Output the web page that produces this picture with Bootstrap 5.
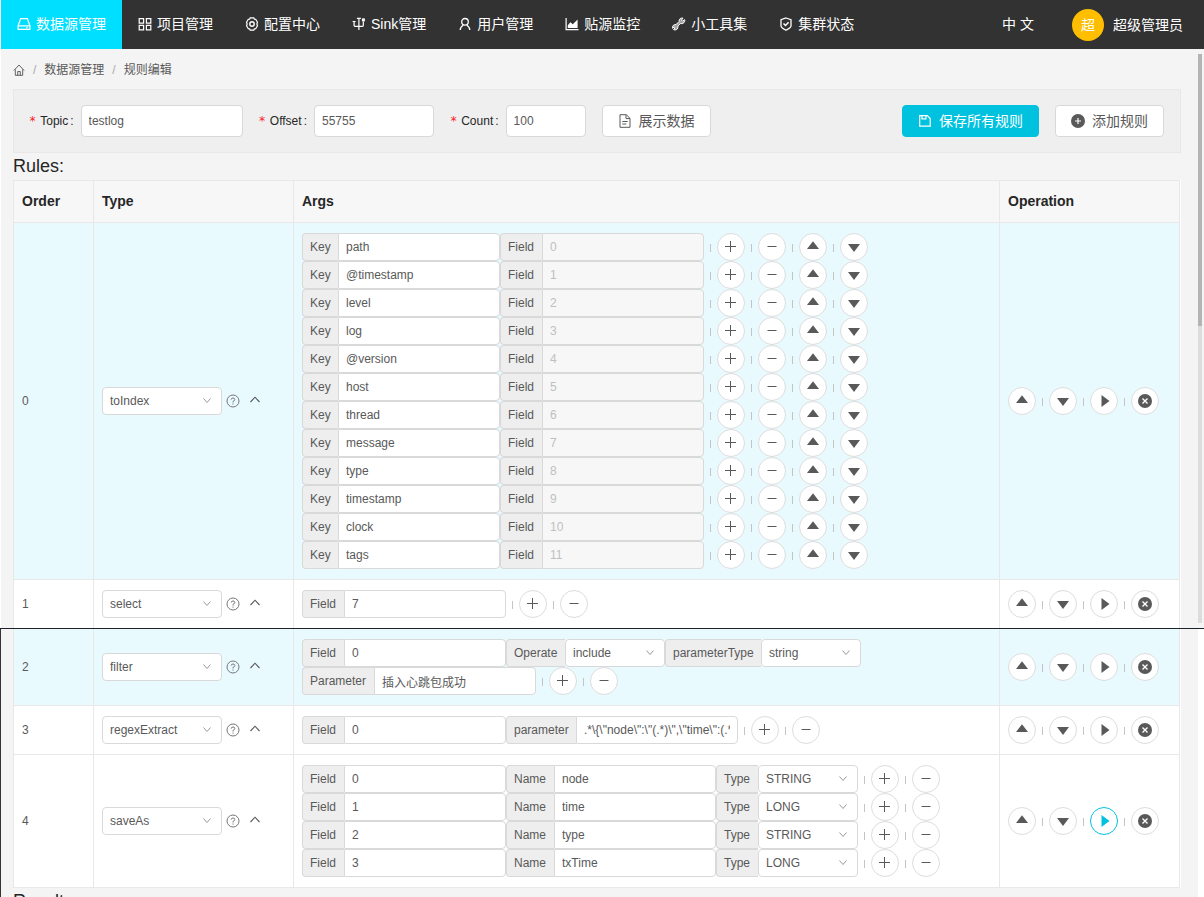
<!DOCTYPE html>
<html lang="zh-CN">
<head>
<meta charset="utf-8">
<meta name="viewport" content="width=device-width, initial-scale=1">
<title>规则编辑</title>
<link rel="stylesheet" href="https://cdn.jsdelivr.net/npm/bootstrap@5.3.0/dist/css/bootstrap.min.css">
<style>
  :root {
    --line: #e8e8e8;
    --ctl-line: #d9d9d9;
    --ink: #595959;
    --accent: #00c1de;
    --bs-border-radius: 4px;
  }
  body {
    font-family: "Liberation Sans", "Noto Sans CJK SC", sans-serif;
    font-size: 12px;
    line-height: 18px;
    color: var(--ink);
    background: #f4f4f4;
  }
  svg { display: block; flex: none; }
  .ico { width: 14px; height: 14px; fill: none; stroke: currentColor; }
  .ico-sm { width: 12px; height: 12px; }

  .edge { width: 1px; }
  .edge-top { height: 629px; background: #fff; }
  .edge-rest { background: #333; }

  /* top navigation */
  .topbar { height: 49px; background: #323232; font-size: 14px; }
  .topbar .nav-link { height: 49px; padding: 0 16px 2px; gap: 5px; color: #fff; white-space: nowrap; }
  .topbar .nav-link.active { background: #00dfff; }
  .lang { padding-bottom: 2px; }
  .avatar { width: 32px; height: 32px; margin: 0 9px 0 38px; background: #ffbf00; }
  .account { padding-right: 21px; padding-top: 1px; }

  .workspace { padding: 0 17px 0 12px; }
  .crumbs { height: 40px; padding-top: 2px; --bs-breadcrumb-font-size: 12px; --bs-breadcrumb-divider-color: #bbb; }
  .crumbs a { color: var(--ink); text-decoration: none; }
  .crumbs .breadcrumb-item + .breadcrumb-item { padding-left: 8px; }
  .crumbs .breadcrumb-item + .breadcrumb-item::before { padding-right: 8px; color: #aaa; }

  /* query form */
  .query { height: 64px; padding: 0 16px 0 15px; background: #efefef; border: 1px solid var(--line); gap: 16px; }
  .query label { color: #262626; }
  .query label::before { content: "*"; color: #f5222d; margin-right: 4px; font-family: "DejaVu Sans Mono", monospace; }
  .query label::after { content: ":"; margin: 0 7px 0 2px; }
  .query .form-control { height: 32px; padding: 0 7px; }
  .field-lg { width: 162px; }
  .field-md { width: 120px; }
  .field-sm { width: 80px; }
  .form-control, .form-select { font-size: 12px; line-height: 18px; color: var(--ink); border: 1px solid var(--ctl-line); border-radius: 4px; background-color: #fff; }
  .tool { height: 32px; padding: 0 15px; gap: 7px; font-size: 14px; line-height: 20px; color: var(--ink); background: #fff; border: 1px solid var(--ctl-line); border-radius: 4px; }
  .tool-main { background: var(--accent); border-color: var(--accent); color: #fff; }

  .section-title { font-size: 18px; line-height: 27px; color: #262626; font-weight: 400; margin: 0; }

  /* rules table */
  .table-holder { background: #fff; padding-right: 1px; }
  .rules { table-layout: fixed; border-collapse: separate; border-spacing: 0; border-top: 1px solid var(--line); border-left: 1px solid var(--line); color: var(--ink); }
  .rules > :not(caption) > * > * { padding: 10px 8px; border: 0 solid var(--line); border-width: 0 1px 1px 0; box-shadow: none; background: #fff; }
  .rules > thead > tr > th { background: #f7f7f7; color: #262626; font-size: 14px; line-height: 21px; }
  .rules > tbody > tr.tinted > td { background: #e9fafe; }
  .col-order { width: 80px; }
  .col-type { width: 200px; }
  .col-ops { width: 180px; }

  .rules .form-control, .rules .form-select { height: 28px; min-height: 28px; padding: 0 7px; flex: none; }
  .rules .form-control { width: 162px; }
  .rules .form-control:disabled { background: #f7f7f7; color: #bfbfbf; }
  .rules .form-select { width: 100px; background-image: url("data:image/svg+xml,%3Csvg xmlns='http://www.w3.org/2000/svg' viewBox='0 0 10 8'%3E%3Cpath d='M1.5 1.5 5 5.5 8.5 1.5' fill='none' stroke='%23999'/%3E%3C/svg%3E"); background-size: 10px 8px; background-position: right 9px center; }
  .rules .form-select.rule-type { width: 120px; }
  .rules .input-group { width: auto; flex: none; }
  .rules .input-group > .input-group-text { padding: 0 0 0 7px; height: 28px; font-size: 12px; line-height: 18px; color: var(--ink); background: #eee; border: 1px solid var(--ctl-line); border-right: 0; border-radius: 4px 0 0 4px; }
  .lab-Key { width: 36px; }
  .lab-Field, .lab-Type { width: 42px; }
  .lab-Name { width: 48px; }
  .lab-Operate { width: 59px; }
  .lab-parameter { width: 70px; }
  .lab-Parameter { width: 72px; }
  .lab-parameterType { width: 96px; }

  .tick { width: 1px; height: 8px; margin: 2px 6px 0; background: #c4c4c4; }
  .round-btn { width: 28px; height: 28px; padding: 0; color: var(--ink); background: #fff; border: 1px solid #ddd; border-radius: 50%; }
  .round-btn.is-on { color: var(--accent); border-color: var(--accent); }
  .plain { padding: 0; border: 0; color: var(--ink); }
  .help { margin: 0 8px 0 4px; color: #777; }

  /* scroll rail */
  .rail { width: 6px; padding-top: 5px; }
  .thumb { width: 4px; height: 272px; background: #b4b4b4; }
  .track { width: 4px; height: 297px; background: #dcdcdc; }
  .rail-end { margin-top: 6px; background: #fff; }
  .seam { top: 628px; height: 1px; background: #1b222a; }
</style>
</head>
<body>
<svg class="d-none" aria-hidden="true">
  <symbol id="i-drive" viewBox="0 0 14 14"><path d="M3.600 1.600h6.800L12.900 8.800V12.400H1.100V8.800zM1.100 8.900H12.900M9.300 10.700h1.400" stroke-width="1.200"/></symbol>
  <symbol id="i-grid" viewBox="0 0 14 14"><path d="M1.200 1.700h4.400v4.400H1.200zM8.400 1.700h4.400v4.400H8.400zM1.200 8.400h4.400v4.400H1.200zM8.400 8.400h4.400v4.400H8.400z" stroke-width="1.200"/></symbol>
  <symbol id="i-gear" viewBox="0 0 14 14"><path d="M5.200.9h3.600l.6 1.300 1.300.1 1.800 3-.7 1.700.7 1.700-1.800 3-1.300.1-.6 1.300H5.200l-.6-1.300-1.300-.1-1.800-3L2.200 7l-.7-1.700 1.800-3 1.300-.1z" stroke-width="1.200"/><circle cx="7" cy="7" r="2.200" stroke-width="1.400"/></symbol>
  <symbol id="i-branch" viewBox="0 0 14 14"><path d="M6.900 1.400V13M4.900 1.400h4M2.100 5v3.600q0 .8.800.8h7.600q.8 0 .8-.8V4.500M.6 4.500h3" stroke-width="1.200"/><path d="M9.900 1.400h3v3h-3z" fill="currentColor" stroke="none"/></symbol>
  <symbol id="i-user" viewBox="0 0 14 14"><circle cx="7" cy="4.800" r="3.300" stroke-width="1.300"/><path d="M2.200 13q.2-3.200 3-4.700M11.800 13q-.2-3.200-3-4.700" stroke-width="1.300"/></symbol>
  <symbol id="i-area" viewBox="0 0 14 14"><path d="M1.100 1v11.600H13.500" stroke-width="1.200"/><path d="M2.800 11V8.200l2.600-3 2.400 2 4.800-4.600V11z" fill="currentColor" stroke="none"/></symbol>
  <symbol id="i-tool" viewBox="0 0 14 14"><path d="M12.700 4.300q-.6 2-2.600 2.400-1 .1-1.700-.2L5.900 9q.4 2.300-1.200 3.500-1.500.9-3.200.1l1.600-1.700-.9-.9-1.600 1.300Q.2 9.300 1.500 8.200q1-.8 2.500-.6l3.100-3.100Q7 2.700 8.200 1.600 9.400.8 11 1.100L9.500 3l1.200 1.200 1.800-1.600q.5.800.2 1.700z" fill="currentColor" fill-opacity=".55" stroke-width="1"/></symbol>
  <symbol id="i-shield" viewBox="0 0 14 14"><path d="M7 1l5 1.600V9Q12 10.500 7 13.200 2 10.500 2 9V2.600z" stroke-width="1.300"/><path d="M4.500 6.500 6.500 8.500 9.600 5.200" stroke-width="1.500"/></symbol>
  <symbol id="i-home" viewBox="0 0 14 14"><path d="M1 7.600 7 1.200l6 6.400M2.700 6.300v6.900h8.600V6.300M5.500 13.200V8.800h3v4.400" stroke-width="1.100"/></symbol>
  <symbol id="i-file" viewBox="0 0 14 14"><path d="M2 .7h6.300L12 4.300v9H2zM8 1v3.600h4M4.300 7.500h5.400M4.300 10h4" stroke-width="1"/></symbol>
  <symbol id="i-save" viewBox="0 0 14 14"><path d="M1.700 1.700h7.600l2.900 2.900v7.600H1.700zM4 1.700v3.100h3.900V1.700" stroke-width="1.200"/></symbol>
  <symbol id="i-addfill" viewBox="0 0 14 14"><circle cx="7" cy="7" r="7" fill="currentColor" stroke="none"/><path d="M7 4v6M4 7h6" stroke="#fff" stroke-width="1.200"/></symbol>
  <symbol id="i-plus" viewBox="0 0 14 14"><path d="M6.500 1v11M1 6.500h11"/></symbol>
  <symbol id="i-minus" viewBox="0 0 14 14"><path d="M2.500 6.500h9"/></symbol>
  <symbol id="i-up" viewBox="0 0 14 14"><path d="M7 1.200 13 9H1z" fill="currentColor" stroke="none"/></symbol>
  <symbol id="i-down" viewBox="0 0 14 14"><path d="M7 12 13 4H1z" fill="currentColor" stroke="none"/></symbol>
  <symbol id="i-play" viewBox="0 0 14 14"><path d="M4.500 1v12L12.500 7z" fill="currentColor" stroke="none"/></symbol>
  <symbol id="i-close" viewBox="0 0 14 14"><circle cx="7" cy="7" r="7" fill="currentColor" stroke="none"/><path d="M4.500 4.500l5 5M9.500 4.500l-5 5" stroke="#fff" stroke-width="1.400"/></symbol>
  <symbol id="i-help" viewBox="0 0 14 14"><circle cx="7" cy="7" r="6" stroke-width="1"/><path d="M5.200 5.600Q5.300 4 7 4t1.800 1.500Q8.800 6.700 7 7.400v1.100M7 9.500v1.100" stroke-width="1"/></symbol>
  <symbol id="i-fold" viewBox="0 0 14 14"><path d="M2.500 8 7 3.200 11.500 8" stroke-width="1.100"/></symbol>
</svg>

<div class="d-flex vh-100 overflow-hidden position-relative">
  <div class="edge d-flex flex-column flex-shrink-0">
    <div class="edge-top flex-shrink-0"></div>
    <div class="edge-rest flex-grow-1"></div>
  </div>

  <div class="flex-grow-1 d-flex flex-column overflow-hidden">
    <header class="topbar d-flex align-items-center flex-shrink-0">
      <nav class="nav flex-nowrap me-auto" aria-label="主导航">
        <a class="nav-link active d-flex align-items-center" href="#"><svg class="ico"><use href="#i-drive"/></svg>数据源管理</a>
        <a class="nav-link d-flex align-items-center" href="#"><svg class="ico"><use href="#i-grid"/></svg>项目管理</a>
        <a class="nav-link d-flex align-items-center" href="#"><svg class="ico"><use href="#i-gear"/></svg>配置中心</a>
        <a class="nav-link d-flex align-items-center" href="#"><svg class="ico"><use href="#i-branch"/></svg>Sink管理</a>
        <a class="nav-link d-flex align-items-center" href="#"><svg class="ico"><use href="#i-user"/></svg>用户管理</a>
        <a class="nav-link d-flex align-items-center" href="#"><svg class="ico"><use href="#i-area"/></svg>贴源监控</a>
        <a class="nav-link d-flex align-items-center" href="#"><svg class="ico"><use href="#i-tool"/></svg>小工具集</a>
        <a class="nav-link d-flex align-items-center" href="#"><svg class="ico"><use href="#i-shield"/></svg>集群状态</a>
      </nav>
      <a class="lang text-white text-decoration-none text-nowrap" href="#">中 文</a>
      <a class="account d-flex align-items-center text-white text-decoration-none text-nowrap" href="#">
        <span class="avatar rounded-circle d-flex align-items-center justify-content-center">超</span>超级管理员
      </a>
    </header>

    <div class="d-flex flex-grow-1 overflow-hidden">
      <main class="workspace flex-grow-1">
        <nav class="crumbs d-flex align-items-center" aria-label="breadcrumb">
          <ol class="breadcrumb mb-0">
            <li class="breadcrumb-item d-flex align-items-center"><a href="#" aria-label="首页"><svg class="ico ico-sm"><use href="#i-home"/></svg></a></li>
            <li class="breadcrumb-item"><a href="#">数据源管理</a></li>
            <li class="breadcrumb-item"><a href="#" aria-current="page">规则编辑</a></li>
          </ol>
        </nav>

        <form class="query d-flex align-items-center" onsubmit="return false">
          <div class="d-flex align-items-center"><label for="topic">Topic</label><input id="topic" class="form-control field-lg" value="testlog"></div>
          <div class="d-flex align-items-center"><label for="offset">Offset</label><input id="offset" class="form-control field-md" value="55755"></div>
          <div class="d-flex align-items-center"><label for="count">Count</label><input id="count" class="form-control field-sm" value="100"></div>
          <button type="button" class="btn tool d-flex align-items-center me-auto"><svg class="ico"><use href="#i-file"/></svg>展示数据</button>
          <button type="button" class="btn tool tool-main d-flex align-items-center"><svg class="ico"><use href="#i-save"/></svg>保存所有规则</button>
          <button type="button" class="btn tool d-flex align-items-center"><svg class="ico"><use href="#i-addfill"/></svg>添加规则</button>
        </form>

        <h2 class="section-title">Rules:</h2>
        <div class="table-holder">
          <table class="table rules align-middle mb-0">
            <colgroup><col class="col-order"><col class="col-type"><col><col class="col-ops"></colgroup>
            <thead><tr><th scope="col">Order</th><th scope="col">Type</th><th scope="col">Args</th><th scope="col">Operation</th></tr></thead>
            <tbody id="rules"></tbody>
          </table>
        </div>
        <h2 class="section-title">Result:</h2>
      </main>

      <div class="rail d-flex flex-column flex-shrink-0" aria-hidden="true">
        <div class="thumb flex-shrink-0"></div>
        <div class="track flex-shrink-0"></div>
        <div class="rail-end flex-grow-1"></div>
      </div>
    </div>
  </div>
  <div class="seam position-absolute start-0 w-100"></div>
</div>

<script src="https://cdn.jsdelivr.net/npm/bootstrap@5.3.0/dist/js/bootstrap.bundle.min.js"></script>
<script>
  // A line is a list of [label, value, kind]; buttons lists the actions after it.
  const keys = ['path', '@timestamp', 'level', 'log', '@version', 'host', 'thread', 'message', 'type', 'timestamp', 'clock', 'tags'];
  const pm = ['plus', 'minus'];
  const rules = [
    { type: 'toIndex', tinted: true, lines: keys.map((k, i) => ({ fields: [['Key', k], ['Field', i, 'disabled']], buttons: ['plus', 'minus', 'up', 'down'] })) },
    { type: 'select', lines: [{ fields: [['Field', 7]], buttons: pm }] },
    { type: 'filter', tinted: true, lines: [
      { fields: [['Field', 0], ['Operate', 'include', 'select'], ['parameterType', 'string', 'select']], buttons: [] },
      { fields: [['Parameter', '插入心跳包成功']], buttons: pm }] },
    { type: 'regexExtract', lines: [{ fields: [['Field', 0], ['parameter', '.*\\{\\"node\\":\\"(.*)\\",\\"time\\":(.*)\\}']], buttons: pm }] },
    { type: 'saveAs', running: true, lines: [['node', 'STRING'], ['time', 'LONG'], ['type', 'STRING'], ['txTime', 'LONG']]
      .map(([n, t], i) => ({ fields: [['Field', i], ['Name', n], ['Type', t, 'select']], buttons: pm })) }
  ];

  const names = { plus: '增加', minus: '删除', up: '上移', down: '下移', play: '执行', close: '移除' };
  const esc = s => String(s).replace(/&/g, '&amp;').replace(/"/g, '&quot;');
  const icon = n => `<svg class="ico"><use href="#i-${n}"/></svg>`;
  const tick = '<span class="tick"></span>';
  const round = (n, on) => `<button type="button" class="btn round-btn d-flex align-items-center justify-content-center${on ? ' is-on' : ''}" aria-label="${names[n]}">${icon(n)}</button>`;
  let uid = 0;
  const group = ([label, value, kind]) => {
    const id = 'arg' + (++uid);
    const control = kind === 'select'
      ? `<select id="${id}" class="form-select ms-0 rounded"><option>${value}</option></select>`
      : `<input id="${id}" class="form-control ms-0" value="${esc(value)}"${kind === 'disabled' ? ' disabled' : ''}>`;
    return `<div class="input-group flex-nowrap"><label class="input-group-text lab-${label}" for="${id}">${label}</label>${control}</div>`;
  };

  document.getElementById('rules').innerHTML = rules.map((r, i) => `
    <tr class="${r.tinted ? 'tinted' : ''}">
      <td>${i}</td>
      <td><div class="d-flex align-items-center">
        <select class="form-select rule-type" aria-label="Type"><option>${r.type}</option></select>
        <button type="button" class="btn plain help" aria-label="帮助">${icon('help')}</button>
        <button type="button" class="btn plain" aria-label="收起">${icon('fold')}</button>
      </div></td>
      <td>${r.lines.map(l => `<div class="d-flex align-items-center">${l.fields.map(group).join('')}${l.buttons.map(b => tick + round(b)).join('')}</div>`).join('')}</td>
      <td><div class="d-flex align-items-center">${['up', 'down', 'play', 'close'].map(b => round(b, r.running && b === 'play')).join(tick)}</div></td>
    </tr>`).join('');
</script>
</body>
</html>
